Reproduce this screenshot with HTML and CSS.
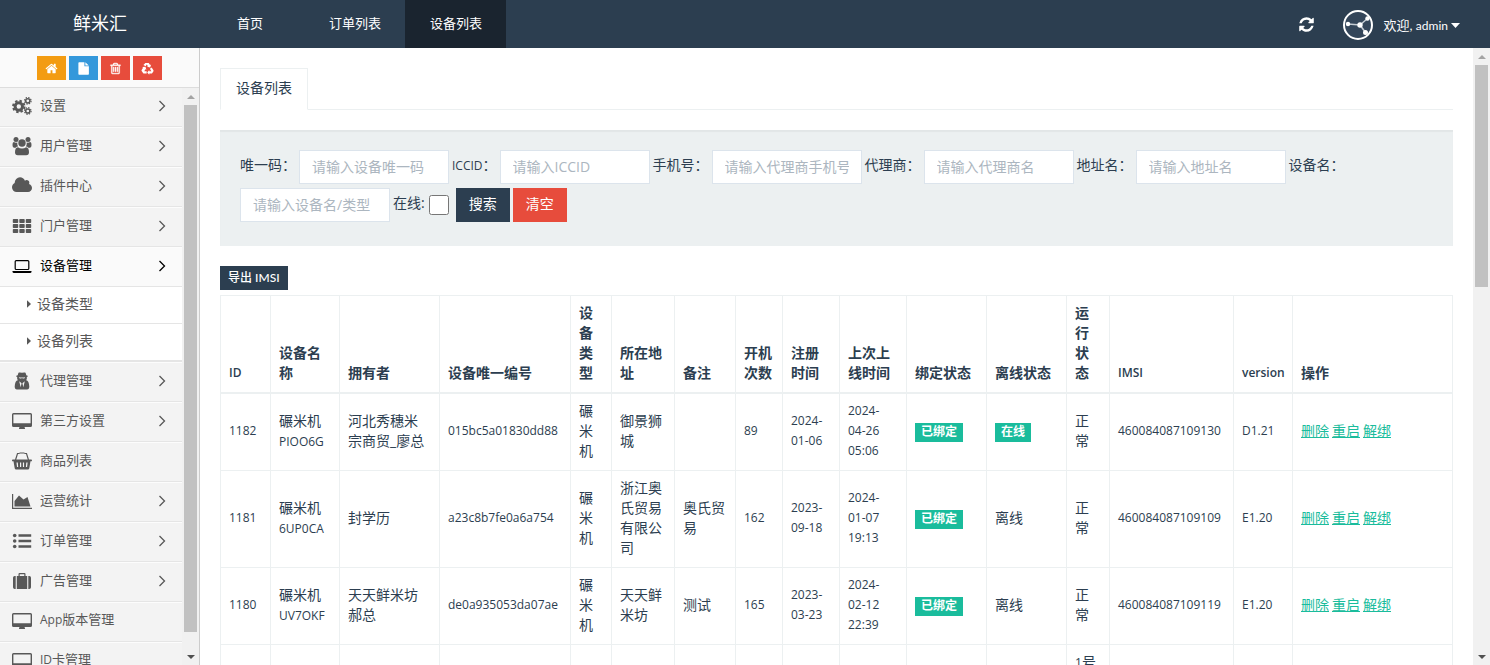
FILE: index.html
```html
<!DOCTYPE html>
<html lang="zh-CN">
<head>
<meta charset="utf-8">
<title>鲜米汇</title>
<link rel="stylesheet" href="styles.css">
</head>
<body>
<svg class="sprite" aria-hidden="true">
  <symbol id="i-home" viewBox="0 0 1792 1792"><path d="M1472 992v480q0 26-19 45t-45 19h-384v-384h-256v384h-384q-26 0-45-19t-19-45v-480q0-1 .5-3t.5-3l575-474 575 474q1 2 1 6zm223-69l-62 74q-8 9-21 11h-3q-13 0-21-7l-692-577-692 577q-12 8-24 7-13-2-21-11l-62-74q-8-10-7-23.5t11-21.5l719-599q32-26 76-26t76 26l244 204v-195q0-14 9-23t23-9h192q14 0 23 9t9 23v408l219 182q10 8 11 21.5t-7 23.5z"/></symbol>
  <symbol id="i-file" viewBox="0 0 14 14"><path d="M1.500 1q0-.8.8-.8h5.700v4.500h4.800v8.300q0 .8-.8.800h-9.700q-.8 0-.8-.8zM9 .3l3.700 3.400h-3.700z"/></symbol>
  <symbol id="i-trash" viewBox="0 0 1792 1792"><path stroke="currentColor" stroke-width="50" d="M704 736v576q0 14-9 23t-23 9h-64q-14 0-23-9t-9-23v-576q0-14 9-23t23-9h64q14 0 23 9t9 23zm256 0v576q0 14-9 23t-23 9h-64q-14 0-23-9t-9-23v-576q0-14 9-23t23-9h64q14 0 23 9t9 23zm256 0v576q0 14-9 23t-23 9h-64q-14 0-23-9t-9-23v-576q0-14 9-23t23-9h64q14 0 23 9t9 23zm128 724v-948h-896v948q0 22 7 40.500t14.500 27 10.500 8.500h832q3 0 10.500-8.500t14.500-27 7-40.500zm-672-1076h448l-48-117q-7-9-17-11h-317q-10 2-17 11zm928 32v64q0 14-9 23t-23 9h-96v948q0 83-47 143.500t-113 60.500h-832q-66 0-113-58.500t-47-141.500v-952h-96q-14 0-23-9t-9-23v-64q0-14 9-23t23-9h309l70-167q15-37 54-63t79-26h320q40 0 79 26t54 63l70 167h309q14 0 23 9t9 23z"/></symbol>
  <symbol id="i-recycle" viewBox="0 0 14 14"><path d="M4.700 1h3.600l1.500 2.200 1.100-.6-1 3.400-3.500-.8 1.100-.7-1.300-1.900-1.200 2-2.400-1.300zM11.500 5.800l1.900 3.200q.2.600-.1 1.100l-1.500 2.300h-2.900v1.400l-2.200-2.600 2.200-2.600v1.300h2.200l-1.500-2.600zM1.300 5.500l3.500-.5 1 3.400-1.200-.6-1 2.100h2.500v2.600h-3.500l-1.900-2.800q-.4-.6 0-1.200l1.500-2.400z"/></symbol>
  <symbol id="i-refresh" viewBox="0 0 1792 1792"><path d="M1639 1056q0 5-1 7-64 268-268 434.500t-478 166.500q-146 0-282.500-55t-243.500-157l-129 129q-19 19-45 19t-45-19-19-45v-448q0-26 19-45t45-19h448q26 0 45 19t19 45-19 45l-137 137q71 66 161 102t187 36q134 0 250-65t186-179q11-17 53-117 8-23 30-23h192q13 0 22.500 9.500t9.500 22.500zm25-800v448q0 26-19 45t-45 19h-448q-26 0-45-19t-19-45 19-45l138-138q-148-137-349-137-134 0-250 65t-186 179q-11 17-53 117-8 23-30 23h-199q-13 0-22.500-9.500t-9.500-22.500v-7q65-268 270-434.500t480-166.500q146 0 284 55.500t245 156.500l130-129q19-19 45-19t45 19 19 45z"/></symbol>
  <symbol id="i-cogs" viewBox="0 0 20 20"><g fill="none" stroke="currentColor"><circle cx="6.800" cy="10.500" r="3.700" stroke-width="3"/><circle cx="6.800" cy="10.500" r="5.700" stroke-width="2" stroke-dasharray="2.400 2.080"/><circle cx="15.800" cy="4.800" r="2.100" stroke-width="1.500"/><circle cx="15.800" cy="4.800" r="3.300" stroke-width="1.200" stroke-dasharray="1.400 1.190"/><circle cx="15.800" cy="15" r="2.100" stroke-width="1.500"/><circle cx="15.800" cy="15" r="3.300" stroke-width="1.200" stroke-dasharray="1.400 1.190"/></g></symbol>
  <symbol id="i-users" viewBox="0 0 20 20"><circle cx="4" cy="3.500" r="2.500"/><circle cx="16" cy="3.500" r="2.500"/><circle cx="10" cy="7" r="3.700"/><path d="M.5 9.300q0-3.300 1.500-3.300 1 1 3.300.6-.3 2 .7 3.900-1.400 0-2.400 1.200h-1.600q-1.500 0-1.500-2.400zM19.500 9.300q0-3.300-1.500-3.300-1 1-3.300.6.3 2-.7 3.900 1.400 0 2.400 1.200h1.600q1.500 0 1.500-2.400zM6 11.200q-3 .2-3 5 0 3 2.800 3h8.400q2.800 0 2.800-3 0-4.800-3-5-1.500 1.200-4 1.200t-4-1.200z"/></symbol>
  <symbol id="i-cloud" viewBox="64 0 1920 1920"><path d="M1984 1152q0 159-112.500 271.500t-271.500 112.500h-1088q-185 0-316.500-131.500t-131.500-316.500q0-132 71-241.500t187-163.500q-2-28-2-43 0-212 150-362t362-150q158 0 286.500 88t187.500 230q70-62 166-62 106 0 181 75t75 181q0 75-41 138 129 30 213 134.500t84 239.500z"/></symbol>
  <symbol id="i-th" viewBox="0 0 20 20"><path d="M1.500 3h4a.7.7 0 0 1 .7.700v2.600a.7.7 0 0 1-.7.700h-4a.7.7 0 0 1-.7-.7v-2.600a.7.7 0 0 1 .7-.7zM8 3h4a.7.7 0 0 1 .7.700v2.600a.7.7 0 0 1-.7.700h-4a.7.7 0 0 1-.7-.7v-2.600a.7.7 0 0 1 .7-.7zM14.500 3h4a.7.7 0 0 1 .7.700v2.600a.7.7 0 0 1-.7.700h-4a.7.7 0 0 1-.7-.7v-2.600a.7.7 0 0 1 .7-.7z"/><path d="M1.500 8h4a.7.7 0 0 1 .7.700v2.600a.7.7 0 0 1-.7.700h-4a.7.7 0 0 1-.7-.7v-2.600a.7.7 0 0 1 .7-.7zM8 8h4a.7.7 0 0 1 .7.700v2.600a.7.7 0 0 1-.7.700h-4a.7.7 0 0 1-.7-.7v-2.600a.7.7 0 0 1 .7-.7zM14.500 8h4a.7.7 0 0 1 .7.700v2.600a.7.7 0 0 1-.7.700h-4a.7.7 0 0 1-.7-.7v-2.600a.7.7 0 0 1 .7-.7z"/><path d="M1.500 13h4a.7.7 0 0 1 .7.700v2.600a.7.7 0 0 1-.7.700h-4a.7.7 0 0 1-.7-.7v-2.600a.7.7 0 0 1 .7-.7zM8 13h4a.7.7 0 0 1 .7.700v2.600a.7.7 0 0 1-.7.700h-4a.7.7 0 0 1-.7-.7v-2.600a.7.7 0 0 1 .7-.7zM14.500 13h4a.7.7 0 0 1 .7.700v2.600a.7.7 0 0 1-.7.700h-4a.7.7 0 0 1-.7-.7v-2.600a.7.7 0 0 1 .7-.7z"/></symbol>
  <symbol id="i-laptop" viewBox="0 0 20 20"><rect x="3.200" y="4.600" width="13.600" height="8.900" rx="1" fill="none" stroke="currentColor" stroke-width="1.200"/><path d="M.5 15h19v.8q0 1.200-1.500 1.200h-16q-1.500 0-1.500-1.200z"/></symbol>
  <symbol id="i-agent" viewBox="0 0 20 20"><path fill-rule="evenodd" d="M6.800 1.500q1.400-.3 3.200.3 1.800-.6 3.200-.3.700.8 1.100 2.700 1.700.4 1.700.9t-1.200.8q.4 1.900-.6 3.400 2.800.6 3.100 6.200 0 3-2.300 3h-10q-2.300 0-2.300-3 .3-5.600 3.100-6.200-1-1.500-.6-3.400-1.200-.3-1.200-.8t1.700-.9q.4-1.900 1.100-2.700zM6.800 6.300q.5 1.500 2.300 1.100.9-.7 1.800 0 1.800.4 2.300-1.100-3.200.5-6.400 0zM7.200 10.200l1.500 6 .9-4zM12.800 10.200l-1.500 6-.9-4z"/></symbol>
  <symbol id="i-desktop" viewBox="0 0 20 20"><path fill-rule="evenodd" d="M1.500 2h17q1.500 0 1.500 1.500v11q0 1.500-1.500 1.500h-6l.5 1.500v.5h-6v-.5l.5-1.500h-6q-1.500 0-1.500-1.500v-11q0-1.500 1.500-1.500zM1.400 3.400v8.800h17.200v-8.800z"/></symbol>
  <symbol id="i-basket" viewBox="0 0 20 20"><path fill="none" stroke="currentColor" stroke-width="1.200" d="M3.500 9l2-6.500h2M16.500 9l-2-6.500h-2M7.500 2h5"/><path fill-rule="evenodd" d="M.8 8.500h18.400q.8 0 .8.900t-.8.900h-.7l-1.200 7q-.2 1.200-1.400 1.200h-11.800q-1.200 0-1.400-1.200l-1.200-7h-.7q-.8 0-.8-.9t.8-.9zM4.500 11.500l.5 4.500h1.200l-.4-4.500zM8 11.500v4.500h1.200v-4.500zM10.900 11.500v4.500h1.200v-4.500zM14.300 11.500l-.4 4.500h1.200l.5-4.500z"/></symbol>
  <symbol id="i-area" viewBox="0 0 20 20"><path d="M0 3h1.200v13.800h18.800v1.200h-20zM2.500 15.500v-5.500l4.500-5.500 4.500 4 4-2.500 3 9.500z"/></symbol>
  <symbol id="i-list" viewBox="0 0 20 20"><circle cx="2.700" cy="4.500" r="1.800"/><circle cx="2.700" cy="10" r="1.800"/><circle cx="2.700" cy="15.500" r="1.800"/><path d="M6.500 3.300h12.700v2.400h-12.700zM6.500 8.800h12.700v2.400h-12.700zM6.500 14.300h12.700v2.400h-12.700z"/></symbol>
  <symbol id="i-case" viewBox="0 0 20 20"><path fill-rule="evenodd" d="M7.500 2h5q1 0 1 1v2h1.700v13h-10.400v-13h1.700v-2q0-1 1-1zM7.700 3.200v1.800h4.600v-1.800zM3.700 5v13h-1q-1.700 0-1.700-1.700v-9.600q0-1.700 1.700-1.700zM16.300 5h1q1.700 0 1.700 1.700v9.600q0 1.700-1.700 1.700h-1z"/></symbol>
  <symbol id="i-angle" viewBox="0 0 10 14"><path fill="none" stroke="currentColor" stroke-width="1.300" d="M2.500 2l5 5-5 5"/></symbol>
  <symbol id="i-right" viewBox="0 0 4 8"><path d="M0 .3l4 3.700-4 3.700z"/></symbol>
  <symbol id="i-up" viewBox="0 0 8 4"><path d="M0 4l4-4 4 4z"/></symbol>
  <symbol id="i-down" viewBox="0 0 8 4"><path d="M0 0h8l-4 4z"/></symbol>
</svg>

<header class="topbar">
  <a class="brand" href="#">鲜米汇</a>
  <nav class="topnav">
    <a class="topnav-link home" href="#">首页</a>
    <a class="topnav-link" href="#">订单列表</a>
    <a class="topnav-link active" href="#">设备列表</a>
  </nav>
  <div class="account">
    <button class="icon-button" type="button" aria-label="刷新"><svg class="refresh"><use href="#i-refresh"/></svg></button>
    <button class="user" type="button">
      <svg class="avatar" viewBox="0 0 30 30"><circle cx="15" cy="15" r="14" fill="#34465a" stroke="#fff" stroke-width="2"/><path d="M5 14l12 1 7.500-6.500M17 15l5.500 7.500" fill="none" stroke="#c5ccd3" stroke-width="1.500"/><circle cx="5" cy="14" r="2.200" fill="#fff"/><circle cx="17" cy="15" r="2.700" fill="#fff"/><circle cx="24.500" cy="8.500" r="2.200" fill="#fff"/><circle cx="22.500" cy="22.500" r="2.500" fill="#fff"/></svg>
      <span>欢迎, <span class="latin">admin</span></span>
      <svg class="caret" viewBox="0 0 8 4" preserveAspectRatio="none"><path d="M0 0h8l-4 4z"/></svg>
    </button>
  </div>
</header>

<div class="body">
  <aside class="sidebar">
    <div class="shortcuts">
      <button class="shortcut orange" type="button" aria-label="主页"><svg><use href="#i-home"/></svg></button>
      <button class="shortcut blue" type="button" aria-label="文件"><svg><use href="#i-file"/></svg></button>
      <button class="shortcut red" type="button" aria-label="清除"><svg><use href="#i-trash"/></svg></button>
      <button class="shortcut red" type="button" aria-label="回收站"><svg><use href="#i-recycle"/></svg></button>
    </div>
    <div class="menu-pane">
      <ul class="menu">
        <li><a href="#"><svg class="icon"><use href="#i-cogs"/></svg><span>设置</span><svg class="angle"><use href="#i-angle"/></svg></a></li>
        <li><a href="#"><svg class="icon"><use href="#i-users"/></svg><span>用户管理</span><svg class="angle"><use href="#i-angle"/></svg></a></li>
        <li><a href="#"><svg class="icon"><use href="#i-cloud"/></svg><span>插件中心</span><svg class="angle"><use href="#i-angle"/></svg></a></li>
        <li><a href="#"><svg class="icon"><use href="#i-th"/></svg><span>门户管理</span><svg class="angle"><use href="#i-angle"/></svg></a></li>
        <li class="open"><a href="#"><svg class="icon"><use href="#i-laptop"/></svg><span>设备管理</span><svg class="angle"><use href="#i-angle"/></svg></a>
          <ul class="submenu">
            <li><a href="#"><svg><use href="#i-right"/></svg><span>设备类型</span></a></li>
            <li><a href="#"><svg><use href="#i-right"/></svg><span>设备列表</span></a></li>
          </ul>
        </li>
        <li><a href="#"><svg class="icon"><use href="#i-agent"/></svg><span>代理管理</span><svg class="angle"><use href="#i-angle"/></svg></a></li>
        <li><a href="#"><svg class="icon"><use href="#i-desktop"/></svg><span>第三方设置</span><svg class="angle"><use href="#i-angle"/></svg></a></li>
        <li><a href="#"><svg class="icon"><use href="#i-basket"/></svg><span>商品列表</span></a></li>
        <li><a href="#"><svg class="icon"><use href="#i-area"/></svg><span>运营统计</span><svg class="angle"><use href="#i-angle"/></svg></a></li>
        <li><a href="#"><svg class="icon"><use href="#i-list"/></svg><span>订单管理</span><svg class="angle"><use href="#i-angle"/></svg></a></li>
        <li><a href="#"><svg class="icon"><use href="#i-case"/></svg><span>广告管理</span><svg class="angle"><use href="#i-angle"/></svg></a></li>
        <li><a href="#"><svg class="icon"><use href="#i-desktop"/></svg><span><span class="latin">App</span>版本管理</span></a></li>
        <li><a href="#"><svg class="icon"><use href="#i-desktop"/></svg><span><span class="latin">ID</span>卡管理</span></a></li>
      </ul>
      <div class="scrollbar menu-scroll"><svg class="up"><use href="#i-up"/></svg><div class="track"><div class="thumb"></div></div><svg class="down"><use href="#i-down"/></svg></div>
    </div>
  </aside>

  <main class="content">
    <nav class="tabs"><a class="tab" href="#">设备列表</a></nav>

    <form class="well">
      <label for="uid">唯一码：</label><input class="field" id="uid" type="text" placeholder="请输入设备唯一码">
      <label for="iccid"><span class="latin">ICCID</span>：</label><input class="field" id="iccid" type="text" placeholder="请输入ICCID">
      <label for="phone">手机号：</label><input class="field" id="phone" type="text" placeholder="请输入代理商手机号">
      <label for="agent">代理商：</label><input class="field" id="agent" type="text" placeholder="请输入代理商名">
      <label for="address">地址名：</label><input class="field" id="address" type="text" placeholder="请输入地址名">
      <label for="device">设备名：</label><input class="field" id="device" type="text" placeholder="请输入设备名/类型">
      <label for="online">在线:</label><input class="check" id="online" type="checkbox">
      <button class="btn dark" type="submit">搜索</button>
      <button class="btn danger" type="reset">清空</button>
    </form>

    <button class="btn dark small" type="button">导出 IMSI</button>

    <table class="devices">
      <colgroup>
        <col class="w-id"><col class="w-name"><col class="w-owner"><col class="w-code"><col class="w-type"><col class="w-place"><col class="w-note"><col class="w-count"><col class="w-reg"><col class="w-last"><col class="w-state"><col class="w-state"><col class="w-run"><col class="w-imsi"><col class="w-ver"><col>
      </colgroup>
      <thead>
        <tr><th class="latin">ID</th><th>设备名称</th><th>拥有者</th><th>设备唯一编号</th><th>设备类型</th><th>所在地址</th><th>备注</th><th>开机次数</th><th>注册时间</th><th>上次上线时间</th><th>绑定状态</th><th>离线状态</th><th>运行状态</th><th class="latin">IMSI</th><th class="latin">version</th><th>操作</th></tr>
      </thead>
      <tbody>
        <tr><td class="latin">1182</td><td>碾米机<span class="latin">PIOO6G</span></td><td>河北秀穗米宗商贸_廖总</td><td class="latin">015bc5a01830dd88</td><td>碾米机</td><td>御景狮城</td><td></td><td class="latin">89</td><td class="latin">2024-01-06</td><td class="latin">2024-<br>04-26 05:06</td><td><span class="badge">已绑定</span></td><td><span class="badge">在线</span></td><td>正常</td><td class="latin">460084087109130</td><td class="latin">D1.21</td><td><div class="actions"><a href="#">删除</a><a href="#">重启</a><a href="#">解绑</a></div></td></tr>
        <tr><td class="latin">1181</td><td>碾米机<span class="latin">6UP0CA</span></td><td>封学历</td><td class="latin">a23c8b7fe0a6a754</td><td>碾米机</td><td>浙江奥氏贸易有限公司</td><td>奥氏贸易</td><td class="latin">162</td><td class="latin">2023-09-18</td><td class="latin">2024-<br>01-07 19:13</td><td><span class="badge">已绑定</span></td><td>离线</td><td>正常</td><td class="latin">460084087109109</td><td class="latin">E1.20</td><td><div class="actions"><a href="#">删除</a><a href="#">重启</a><a href="#">解绑</a></div></td></tr>
        <tr><td class="latin">1180</td><td>碾米机<span class="latin">UV7OKF</span></td><td>天天鲜米坊郝总</td><td class="latin">de0a935053da07ae</td><td>碾米机</td><td>天天鲜米坊</td><td>测试</td><td class="latin">165</td><td class="latin">2023-03-23</td><td class="latin">2024-<br>02-12 22:39</td><td><span class="badge">已绑定</span></td><td>离线</td><td>正常</td><td class="latin">460084087109119</td><td class="latin">E1.20</td><td><div class="actions"><a href="#">删除</a><a href="#">重启</a><a href="#">解绑</a></div></td></tr>
        <tr><td></td><td></td><td></td><td></td><td></td><td></td><td></td><td></td><td></td><td></td><td></td><td></td><td><span class="latin">1</span>号</td><td></td><td></td><td></td></tr>
      </tbody>
    </table>
  </main>
  <div class="scrollbar page-scroll"><svg class="up"><use href="#i-up"/></svg><div class="track"><div class="thumb"></div></div><svg class="down"><use href="#i-down"/></svg></div>
</div>
</body>
</html>
```
FILE: styles.css
```css
* { box-sizing: border-box; }
body {
  margin: 0;
  height: 100vh;
  display: flex;
  flex-direction: column;
  overflow: hidden;
  background: #fff;
  color: #2c3e50;
  font: 14px/20px "Open Sans", "Noto Sans CJK SC", sans-serif;
}
ul { list-style: none; margin: 0; padding: 0; }
a { color: inherit; text-decoration: none; }
button { font: inherit; color: inherit; border: 0; padding: 0; background: none; }
svg { fill: currentColor; flex: none; display: block; }
.sprite { position: absolute; width: 0; height: 0; }
.latin { font-size: 12px; }

/* top bar */
.topbar { flex: none; display: flex; height: 48px; background: #2c3e50; color: #fff; font-size: 13px; font-family: Lato, "Noto Sans CJK SC", sans-serif; }
.brand { width: 200px; text-align: center; font-size: 18px; line-height: 46px; }
.topnav { display: flex; margin-left: 12px; }
.topnav-link { padding: 0 24px 0 25px; line-height: 46px; }
.topnav-link.home { margin-right: 17px; }
.topnav-link.active { background: #1a242f; }
.account { display: flex; align-items: center; gap: 28px; margin-left: auto; padding-right: 30px; }
.refresh { width: 17px; height: 17px; }
.user { display: flex; align-items: center; padding-top: 2px; }
.avatar { width: 30px; height: 30px; margin-right: 11px; }
.caret { width: 9px; height: 5px; margin-left: 3px; }

.body { flex: 1; min-height: 0; display: flex; }

/* sidebar */
.sidebar { flex: none; width: 200px; display: flex; flex-direction: column; border-right: 1px solid #ccc; background: #f3f3f3; color: #585858; }
.shortcuts { flex: none; display: flex; justify-content: center; gap: 3px; height: 40px; padding-top: 8px; background: #fafafa; border-bottom: 1px solid #ddd; }
.shortcut { display: flex; align-items: center; justify-content: center; width: 29px; height: 24px; color: #fff; }
.shortcut svg { width: 13px; height: 13px; }
.orange { background: #f39c12; }
.blue { background: #3498db; }
.red { background: #e74c3c; }
.menu-pane { flex: 1; min-height: 0; display: flex; }
.menu { flex: 1; overflow: hidden; font-size: 13px; }
.menu > li > a { display: flex; align-items: center; height: 40px; padding: 0 15px 2px 12px; border-top: 1px solid #fcfcfc; border-bottom: 1px solid #e5e5e5; }
.menu > li:first-child > a { height: 39px; border-top: 0; }
.menu > li > a > span { padding-bottom: 3px; }
.icon { width: 20px; height: 20px; margin-right: 8px; }
.angle { width: 10px; height: 14px; margin-left: auto; }
.menu > .open > a { background: #fafafa; color: #000; }
.submenu { background: #fff; border-bottom: 1px solid #e5e5e5; font-size: 14px; }
.submenu a { display: flex; align-items: center; gap: 6px; height: 37px; padding: 0 0 2px 27px; border-bottom: 1px solid #e5e5e5; }
.submenu svg { width: 4px; height: 8px; }

/* scroll bars */
.scrollbar { flex: none; width: 17px; display: flex; flex-direction: column; background: #f1f1f1; }
.scrollbar svg { width: 8px; height: 4px; align-self: center; margin: 7px 0 6px; }
.up { color: #a3a3a3; }
.down { color: #505050; }
.track { flex: 1; padding: 0 2px; }
.thumb { background: #c1c1c1; }
.menu-scroll .thumb { height: 97%; }
.page-scroll .thumb { height: 38%; }

/* content */
.content { flex: 1; min-width: 0; padding: 20px 20px 0; overflow: hidden; }
.tabs { display: flex; border-bottom: 1px solid #ecf0f1; margin-bottom: 20px; }
.tab { padding: 9px 15px 11px; margin-bottom: -1px; border: 1px solid #ecf0f1; border-bottom-color: #fff; }
.well { display: flex; flex-wrap: wrap; align-items: center; gap: 4px 3px; min-height: 116px; padding: 20px 20px 24px; margin-bottom: 20px; background: #ecf0f1; box-shadow: inset 0 2px 1px rgba(0, 0, 0, .04); }
.well label { padding-bottom: 4px; }
.field { width: 150px; height: 34px; padding: 0 12px 2px; border: 1px solid #dce4ec; background: #fff; font: inherit; color: inherit; }
.field::placeholder { color: #acb6c0; opacity: 1; }
.check { width: 20px; height: 20px; margin: 0 4px 0 1px; }
.btn { height: 34px; padding: 0 13px 2px; color: #fff; }
.dark { background: #2c3e50; }
.danger { background: #e74c3c; }
.small { display: block; height: 24px; padding: 0 8px 1px; margin-bottom: 5px; font-size: 12px; font-weight: 500; font-family: Lato, "Noto Sans CJK SC", sans-serif; }

/* device table */
.devices { width: 100%; table-layout: fixed; border-collapse: collapse; }
.devices th, .devices td { padding: 7px 8px 9px; border: 1px solid #ecf0f1; text-align: left; vertical-align: middle; }
.devices th { vertical-align: bottom; border-bottom-width: 2px; }
.devices th.latin { font-weight: 600; white-space: nowrap; }
.w-id { width: 50px; }
.w-name { width: 69px; }
.w-owner { width: 100px; }
.w-code { width: 131px; }
.w-type { width: 41px; }
.w-place { width: 63px; }
.w-note { width: 61px; }
.w-count { width: 47px; }
.w-reg { width: 57px; }
.w-last { width: 67px; }
.w-state { width: 80px; }
.w-run { width: 43px; }
.w-imsi { width: 124px; }
.w-ver { width: 59px; }
.badge { display: block; width: fit-content; margin-top: 2px; padding: 0 6px 1px; background: #1abc9c; color: #fff; font-size: 12px; font-weight: 700; line-height: 18px; }
.actions { display: flex; gap: 3px; color: #1abc9c; }
.actions a { text-decoration: underline; }
```
